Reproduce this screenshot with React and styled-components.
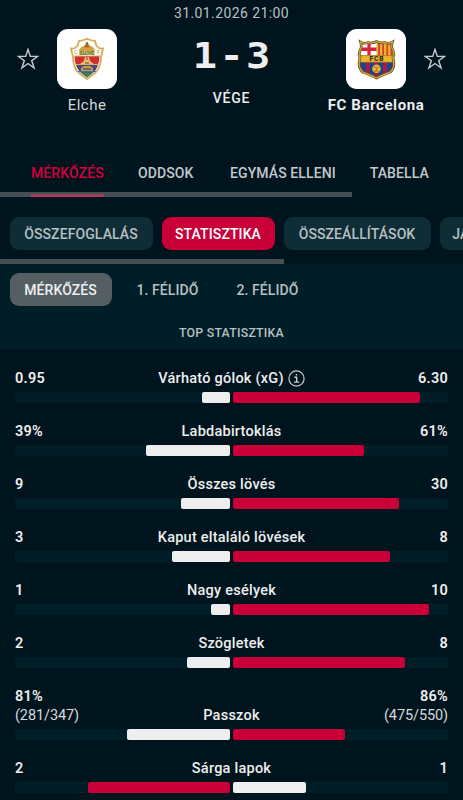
import React, { useState } from "react";
import styled, { createGlobalStyle } from "styled-components";

const GlobalStyle = createGlobalStyle`
  * { box-sizing: border-box; }
  body {
    margin: 0;
    background: #00141e;
    color: #eee;
    font-family: Roboto, "Liberation Sans", sans-serif;
    overflow: hidden;
  }
  button {
    margin: 0;
    padding: 0;
    border: 0;
    background: none;
    color: inherit;
    font: inherit;
  }
`;

const tabs = [
  { name: "MÉRKŐZÉS", width: 73 },
  { name: "ODDSOK", width: 58 },
  { name: "EGYMÁS ELLENI", width: 105.5 },
  { name: "TABELLA", width: 57 },
  { name: "HÍREK", width: 50 },
];

const pages = [
  { name: "ÖSSZEFOGLALÁS", width: 143 },
  { name: "STATISZTIKA", width: 113 },
  { name: "ÖSSZEÁLLÍTÁSOK", width: 147 },
  { name: "JÁTÉKOSOK", width: 104 },
];

const periods = [
  { name: "MÉRKŐZÉS", width: 102 },
  { name: "1. FÉLIDŐ", width: 88 },
  { name: "2. FÉLIDŐ", width: 88 },
];

const stats = [
  { name: "Várható gólok (xG)", home: "0.95", away: "6.30", share: 13, info: true },
  { name: "Labdabirtoklás", home: "39%", away: "61%", share: 39 },
  { name: "Összes lövés", home: "9", away: "30", share: 23 },
  { name: "Kaput eltaláló lövések", home: "3", away: "8", share: 27 },
  { name: "Nagy esélyek", home: "1", away: "10", share: 9 },
  { name: "Szögletek", home: "2", away: "8", share: 20 },
  { name: "Passzok", home: "81%", away: "86%", homeSub: "(281/347)", awaySub: "(475/550)", share: 48 },
  { name: "Sárga lapok", home: "2", away: "1", share: 66, homeLeads: true },
];

function Star() {
  return (
    <StarButton aria-label="Kedvenc">
      <svg width="22" height="22" viewBox="0 0 22 22" fill="none" stroke="#c8cdcf" strokeWidth="1.4">
        <path d="M11 1.4 13.3 8.4H20.7L14.7 12.7 17.1 20 11 15.5 4.9 20 7.3 12.7 1.3 8.4H8.7Z" />
      </svg>
    </StarButton>
  );
}

function ElcheCrest() {
  return (
    <svg width="34" height="42" viewBox="0 0 34 42">
      <path d="M9 3C12 3 14 2 17 .8C20 2 22 3 25 3L26.5 8Q29 11 33 10.5L31 19Q31 30 25 35Q21 38 17 41Q13 38 9 35Q3 30 3 19L1 10.5Q5 11 7.5 8Z" fill="#fffdf5" stroke="#d4ad5f" strokeWidth="1.8" />
      <path d="M4.5 18H29.5Q29.5 23 28 27H6Q4.5 23 4.5 18Z" fill="#cf2f31" />
      <path d="M6 27H28Q26 33 22 35.5L17 39.5 12 35.5Q8 33 6 27Z" fill="#4a467f" />
      <path d="M11 34.5H23L17 39Z" fill="#3f8052" />
      <path d="M9 13Q10 8.5 14 8L16 5H18L20 8Q24 8.5 25 13Z" fill="#d2a13c" />
      <path d="M17 4V8M14.5 8.5H19.5" stroke="#9d5735" strokeWidth="1.6" />
      <path d="M9 15H25" stroke="#c9bd6c" strokeWidth="3.6" />
      <text x="17" y="16.6" textAnchor="middle" fontFamily="Roboto, sans-serif" fontSize="4.6" fontWeight="700" fill="#4f7338">ELCHE</text>
      <text x="6" y="15.6" textAnchor="middle" fontFamily="Roboto, sans-serif" fontSize="5.5" fill="#b08a48">C</text>
      <text x="28.4" y="15.6" textAnchor="middle" fontFamily="Roboto, sans-serif" fontSize="5.5" fill="#b08a48">F</text>
      <path d="M3.5 18H30.5M5.5 26.5H28.5" stroke="#d8b25f" strokeWidth="1" />
      <path d="M10 26 14 23 15 19H19L20 23 24 26Z" fill="#e4c276" />
      <path d="M15 25H19M17 19V22" stroke="#c2573d" strokeWidth="1.4" />
      <path d="M11 33V30L14 28H20L23 30V33Z" fill="#c89c4a" />
      <path d="M13 31H21" stroke="#434776" strokeWidth="1.3" />
      <path d="M8 33.5H26" stroke="#3a76a2" strokeWidth="1" />
    </svg>
  );
}

const shieldPath = "M4.5 3Q8 5 12 3.5Q16 4.5 20 2.5Q24 4.5 28 3.5Q32 5 35.5 3Q34 8 36 11Q38 15 36 18Q39 28 33 32.5Q28 34 20 38Q12 34 7 32.5Q1 28 4 18Q2 15 4 11Q6 8 4.5 3Z";

function BarcelonaCrest() {
  return (
    <svg width="41" height="41" viewBox="0 0 40 40">
      <defs>
        <clipPath id="shield">
          <path d={shieldPath} />
        </clipPath>
      </defs>
      <g clipPath="url(#shield)">
        <path d="M0 0H40V40H0Z" fill="#eab52e" />
        <path d="M5 3H20V16H5Z" fill="#fff" />
        <path d="M12.7 3V16M5 10H20" stroke="#d9223c" strokeWidth="3.2" />
        <path d="M22.5 3V16M26.5 3V16M30.5 3V16M34.5 3V16" stroke="#d83b30" strokeWidth="1.7" />
        <path d="M2 22.5H38V40H2Z" fill="#19458c" />
        <path d="M11.5 22.5V36M20 22.5V38M28.5 22.5V36" stroke="#a51c48" strokeWidth="4" />
        <path d="M3 16.2H37M3 22.7H37" stroke="#a87622" strokeWidth=".8" />
      </g>
      <path d={shieldPath} fill="none" stroke="#634d28" strokeWidth="2.6" />
      <path d={shieldPath} fill="none" stroke="#dfaa35" strokeWidth="1.2" />
      <text x="20.5" y="21.8" textAnchor="middle" fontFamily="Roboto, sans-serif" fontSize="6.4" fontWeight="900" letterSpacing="1" fill="#302d20">FCB</text>
      <circle cx="20" cy="29" r="4.2" fill="#e7b435" />
      <path d="M17.5 27 20 28.5 22.5 27M20 28.5V31L17.5 32M20 31 23 32" fill="none" stroke="#8a6024" strokeWidth=".7" />
    </svg>
  );
}

function StatRow({ stat }) {
  return (
    <Stat>
      <StatHead>
        <Value>
          {stat.home}
          {stat.homeSub && <SubValue>{stat.homeSub}</SubValue>}
        </Value>
        <StatName>
          {stat.name}
          {stat.info && (
            <svg width="17" height="17" viewBox="0 0 17 17" fill="none" stroke="#c8cdcf">
              <circle cx="8.5" cy="8.5" r="7.6" strokeWidth="1.2" />
              <path d="M6.2 7.2H8.7V12M5.9 12.1H11.2M8.5 4V5.6" strokeWidth="1.4" />
            </svg>
          )}
        </StatName>
        <Value $right>
          {stat.away}
          {stat.awaySub && <SubValue>{stat.awaySub}</SubValue>}
        </Value>
      </StatHead>
      <Bars>
        <Track $home>
          <Fill $red={stat.homeLeads} style={{ width: `${stat.share}%` }} />
        </Track>
        <Track>
          <Fill $red={!stat.homeLeads} style={{ width: `${100 - stat.share}%` }} />
        </Track>
      </Bars>
    </Stat>
  );
}

function App() {
  const [tab, setTab] = useState(0);
  const [page, setPage] = useState(1);
  const [period, setPeriod] = useState(0);

  return (
    <Screen>
      <GlobalStyle />
      <Header>
        <Kickoff>31.01.2026 21:00</Kickoff>
        <Match>
          <Star />
          <Team>
            <Logo><ElcheCrest /></Logo>
            <TeamName>Elche</TeamName>
          </Team>
          <Result>
            <Score><span>1</span><span>-</span><span>3</span></Score>
            <Status>VÉGE</Status>
          </Result>
          <Team>
            <Logo><BarcelonaCrest /></Logo>
            <TeamName $winner>FC Barcelona</TeamName>
          </Team>
          <Star />
        </Match>
      </Header>
      <Tabs>
        {tabs.map((item, i) => (
          <Tab key={item.name} $width={item.width} $active={tab === i} onClick={() => setTab(i)}>{item.name}</Tab>
        ))}
      </Tabs>
      <Scrollbar $width={352}><Marker /></Scrollbar>
      <Pages>
        {pages.map((item, i) => (
          <Pill key={item.name} $width={item.width} $active={page === i} onClick={() => setPage(i)}>{item.name}</Pill>
        ))}
      </Pages>
      <Scrollbar $width={284} />
      <Periods>
        {periods.map((item, i) => (
          <Period key={item.name} $width={item.width} $active={period === i} onClick={() => setPeriod(i)}>{item.name}</Period>
        ))}
      </Periods>
      <Heading>TOP STATISZTIKA</Heading>
      <StatList>
        {stats.map((stat) => <StatRow key={stat.name} stat={stat} />)}
      </StatList>
    </Screen>
  );
}

export default App;


const Screen = styled.div`
  width: 463px;
  height: 800px;
  overflow: hidden;
`

const Header = styled.header`
  height: 150px;
  padding-top: 4px;
`

const Kickoff = styled.div`
  height: 25px;
  line-height: 18px;
  text-align: center;
  font-size: 14px;
  letter-spacing: 0.4px;
  color: #b9c0c3;
`

const Match = styled.div`
  display: grid;
  grid-template-columns: 22px 96px 1fr 96px 22px;
  padding: 0 17px;
`

const StarButton = styled.button`
  height: 60px;
  display: flex;
  align-items: center;
`

const Team = styled.div`
  display: flex;
  flex-direction: column;
  align-items: center;
`

const Logo = styled.div`
  width: 60px;
  height: 60px;
  border-radius: 11px;
  background: #fff;
  display: flex;
  align-items: center;
  justify-content: center;
`

const TeamName = styled.div`
  margin-top: 6px;
  line-height: 20px;
  font-size: 15px;
  letter-spacing: ${p => p.$winner ? 0.6 : 0.5}px;
  white-space: nowrap;
  font-weight: ${p => p.$winner ? 700 : 400};
  color: ${p => p.$winner ? '#eee' : '#d5d9da'};
`

const Result = styled.div`
  display: flex;
  flex-direction: column;
  align-items: center;
`

const Score = styled.div`
  display: flex;
  gap: 2px;
  height: 50px;
  line-height: 53px;
  font-family: "DejaVu Sans Mono", monospace;
  font-weight: 700;
  font-size: 36px;
  transform: scaleX(1.12);
`

const Status = styled.div`
  margin-top: 9px;
  line-height: 20px;
  font-size: 14px;
  font-weight: 500;
  letter-spacing: 0.8px;
`

const Tabs = styled.nav`
  display: flex;
  gap: 34px;
  height: 42px;
  padding: 4px 0 0 31px;
`

const Tab = styled.button`
  flex: 0 0 ${p => p.$width}px;
  height: 38px;
  font-size: 14px;
  font-weight: 500;
  letter-spacing: 0.1px;
  text-align: left;
  white-space: nowrap;
  color: ${p => p.$active ? '#d4003b' : '#c3c9cb'};
`

const Scrollbar = styled.div`
  width: ${p => p.$width}px;
  height: 5px;
  background: #454e53;
`

const Marker = styled.div`
  width: 73px;
  height: 5px;
  margin-left: 31px;
  border-top: 2px solid #454e53;
  background: #9c4058;
`

const Pages = styled.nav`
  display: flex;
  gap: 9px;
  height: 62px;
  padding: 20px 0 0 9.5px;
`

const Pill = styled.button`
  flex: 0 0 ${p => p.$width}px;
  height: 33px;
  border-radius: 9px;
  font-size: 14px;
  font-weight: 500;
  letter-spacing: 0.1px;
  white-space: nowrap;
  color: ${p => p.$active ? '#fff' : '#b7c0c3'};
  background: ${p => p.$active ? '#c80037' : '#0f2d37'};
`

const Periods = styled.nav`
  display: flex;
  gap: 12px;
  height: 53px;
  padding: 9px 0 0 9.5px;
  background: #001e28;
`

const Period = styled(Pill)`
  color: ${p => p.$active ? '#eee' : '#b7c0c3'};
  background: ${p => p.$active ? '#555e62' : 'transparent'};
`

const Heading = styled.h2`
  margin: 0;
  height: 32px;
  line-height: 32px;
  text-align: center;
  font-size: 12.3px;
  font-weight: 500;
  letter-spacing: 0.25px;
  color: #b7c0c3;
  background: #001e28;
`

const StatList = styled.div`
  padding: 20px 15px 0 15px;
`

const Stat = styled.div`
  margin-bottom: 19px;
`

const StatHead = styled.div`
  display: grid;
  grid-template-columns: 1fr auto 1fr;
  align-items: end;
  line-height: 19px;
  padding-bottom: 4px;
  font-size: 14.5px;
  font-weight: 500;
  letter-spacing: 0.24px;
`

const Value = styled.div`
  display: flex;
  flex-direction: column;
  font-weight: 600;
  align-items: ${p => p.$right ? 'flex-end' : 'flex-start'};
`

const SubValue = styled.span`
  font-weight: 400;
  letter-spacing: -0.1px;
  color: #d5d9da;
`

const StatName = styled.div`
  display: flex;
  align-items: center;
  gap: 4px;
  white-space: nowrap;
`

const Bars = styled.div`
  display: flex;
  gap: 3px;
`

const Track = styled.div`
  flex: 1;
  display: flex;
  justify-content: ${p => p.$home ? 'flex-end' : 'flex-start'};
  height: 11px;
  border-radius: 2px;
  background: #001e28;
`

const Fill = styled.div`
  border-radius: 2px;
  background: ${p => p.$red ? '#c80037' : '#eee'};
`
